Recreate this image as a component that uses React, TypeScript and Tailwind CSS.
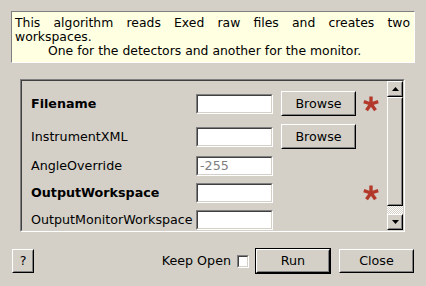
const font = "font-['DejaVu_Sans',sans-serif]";

function Sunken({ className, children }: { className: string; children?: React.ReactNode }) {
  return (
    <div className={`border border-t-[#808080] border-l-[#808080] border-b-white border-r-white ${className}`}>
      <div className="flex h-full w-full items-center border border-t-[#404040] border-l-[#404040] border-b-[#d4d0c8] border-r-[#d4d0c8] bg-white">
        {children}
      </div>
    </div>
  );
}

function Raised({ className, children }: { className: string; children?: React.ReactNode }) {
  return (
    <div className={`border border-t-white border-l-white border-b-[#000] border-r-[#000] bg-[#d4d0c8] ${className}`}>
      <div className="flex h-full w-full items-center justify-center border border-t-[#d4d0c8] border-l-[#d4d0c8] border-b-[#808080] border-r-[#808080]">
        {children}
      </div>
    </div>
  );
}

function Star() {
  return (
    <svg width="16" height="16" viewBox="0 0 16 16" className="ml-[7px] shrink-0">
      <g stroke="#b3392b" strokeWidth="3.4" strokeLinecap="butt">
        <line x1="8" y1="8" x2="8" y2="0.5" />
        <line x1="8" y1="8" x2="15.2" y2="5.6" />
        <line x1="8" y1="8" x2="12.5" y2="14.3" />
        <line x1="8" y1="8" x2="3.5" y2="14.3" />
        <line x1="8" y1="8" x2="0.8" y2="5.6" />
      </g>
    </svg>
  );
}

type Row = { label: string; bold?: boolean; browse?: boolean; required?: boolean; value?: string };

const rows: Row[] = [
  { label: "Filename", bold: true, browse: true, required: true },
  { label: "InstrumentXML", browse: true },
  { label: "AngleOverride", value: "-255" },
  { label: "OutputWorkspace", bold: true, required: true },
  { label: "OutputMonitorWorkspace" },
];

function ScrollBar() {
  return (
    <div className="flex w-[16px] shrink-0 flex-col">
      <Raised className="h-[16px] w-[16px]">
        <svg width="7" height="4" viewBox="0 0 7 4"><path d="M0 4 L3.5 0 L7 4 Z" fill="#000" /></svg>
      </Raised>
      <Raised className="h-[110px] w-[16px]" />
      <div className="h-[8px] bg-[repeating-conic-gradient(#ffffff_0_25%,#d4d0c8_0_50%)] bg-[length:2px_2px]" />
      <Raised className="h-[16px] w-[16px]">
        <svg width="7" height="4" viewBox="0 0 7 4"><path d="M0 0 L7 0 L3.5 4 Z" fill="#000" /></svg>
      </Raised>
    </div>
  );
}

export default function App() {
  return (
    <div className={`flex h-[286px] w-[426px] flex-col bg-[#d4d0c8] text-[12.7px] text-black ${font}`}>
      <div className="mx-[11px] mt-[11px] h-[52px] border border-t-[#808080] border-l-[#808080] border-b-white border-r-white bg-[#ffffe1] pl-[3px] pr-[4px] pt-[4px] text-[12.4px] leading-[14px]">
        <p className="text-justify">This algorithm reads Exed raw files and creates two workspaces.</p>
        <p className="whitespace-nowrap pl-[33px]">One for the detectors and another for the monitor.</p>
      </div>

      <div className="ml-[20px] mt-[16px] h-[153px] w-[385px] border border-t-[#808080] border-l-[#808080] border-b-white border-r-white">
        <div className="flex h-full border border-t-[#404040] border-l-[#404040] border-b-[#d4d0c8] border-r-[#d4d0c8]">
          <div className="flex flex-1 flex-col gap-[7px] overflow-hidden pl-[9px] pt-[10px]">
            {rows.map((row, i) => (
              <div key={row.label} className={`flex shrink-0 items-center ${row.browse ? "h-[25px]" : "h-[20px]"} ${i === 0 ? "mb-[1px]" : ""}`}>
                <span className={`w-[165px] shrink-0 whitespace-nowrap ${row.bold ? "font-bold" : ""}`}>{row.label}</span>
                <Sunken className="h-[20px] w-[77px] shrink-0">
                  {row.value ? <span className="pl-[2px] text-[#808080]">{row.value}</span> : null}
                </Sunken>
                {row.browse ? <Raised className="ml-[8px] h-[25px] w-[75px] shrink-0">Browse</Raised> : <div className="ml-[8px] w-[75px] shrink-0" />}
                {row.required ? <Star /> : null}
              </div>
            ))}
          </div>
          <ScrollBar />
        </div>
      </div>

      <div className="mt-[16px] flex items-center px-[12px]">
        <Raised className="h-[24px] w-[22px]">?</Raised>
        <div className="flex-1" />
        <span>Keep Open</span>
        <Sunken className="ml-[6px] h-[13px] w-[12px]" />
        <div className="ml-[6px] h-[26px] w-[76px] border border-black">
          <Raised className="h-full w-full">Run</Raised>
        </div>
        <Raised className="ml-[8px] h-[24px] w-[75px]">Close</Raised>
      </div>
    </div>
  );
}
